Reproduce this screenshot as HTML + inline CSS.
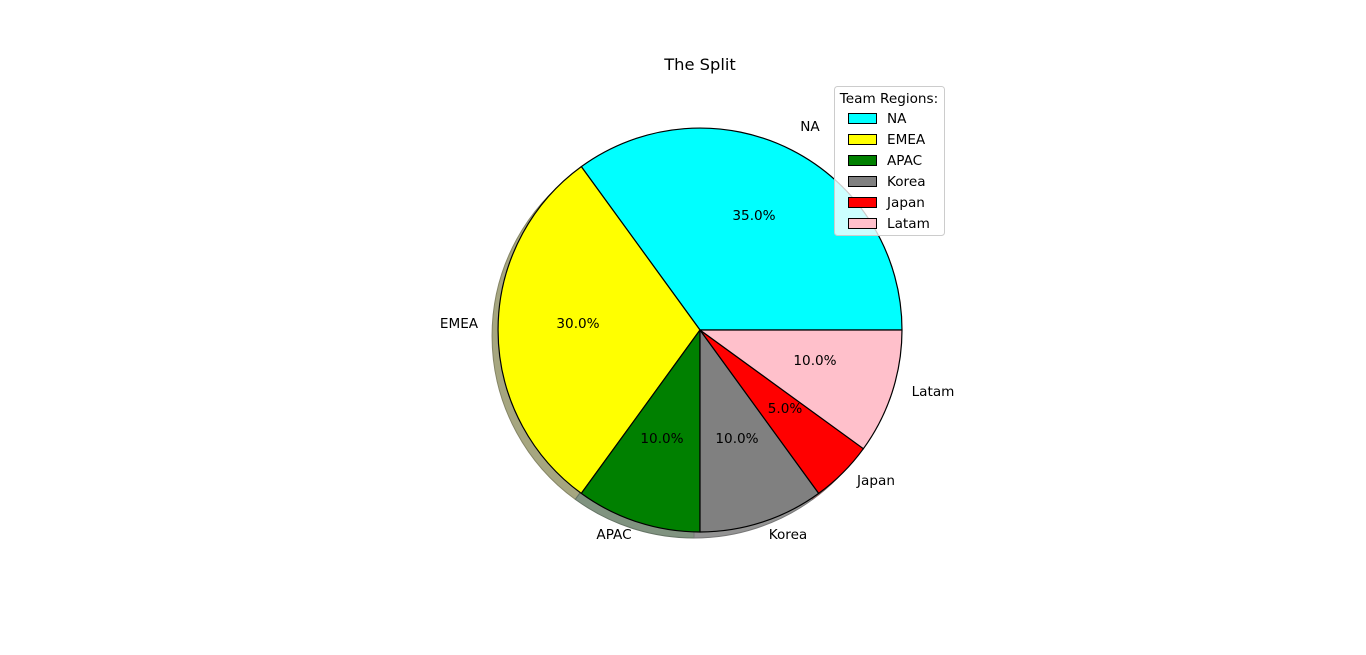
<!DOCTYPE html>
<html><head><meta charset="utf-8"><style>
html,body{margin:0;padding:0;background:#fff;}
svg{display:block;}
text{font-family:"DejaVu Sans","Liberation Sans",sans-serif;font-size:13.6px;fill:#000;}
</style></head><body>
<svg width="1366" height="655" viewBox="0 0 1366 655" xmlns="http://www.w3.org/2000/svg">
<g transform="translate(-6,6)" stroke-width="1" stroke-linejoin="round">
<path d="M700,330 L902,330 A202,202 0 0 0 581.3,166.6 Z" fill="#80a6a6" stroke="#668585"/>
<path d="M700,330 L581.3,166.6 A202,202 0 0 0 581.3,493.4 Z" fill="#a6a680" stroke="#858566"/>
<path d="M700,330 L581.3,493.4 A202,202 0 0 0 700,532 Z" fill="#809380" stroke="#667566"/>
<path d="M700,330 L700,532 A202,202 0 0 0 818.7,493.4 Z" fill="#939393" stroke="#777"/>
<path d="M700,330 L818.7,493.4 A202,202 0 0 0 863.4,448.7 Z" fill="#a68080" stroke="#856666"/>
<path d="M700,330 L863.4,448.7 A202,202 0 0 0 902,330 Z" fill="#a69b9d" stroke="#857c7e"/>
</g>
<g stroke="#000" stroke-width="1.2" stroke-linejoin="round">
<path d="M700,330 L902,330 A202,202 0 0 0 581.3,166.6 Z" fill="#00ffff"/>
<path d="M700,330 L581.3,166.6 A202,202 0 0 0 581.3,493.4 Z" fill="#ffff00"/>
<path d="M700,330 L581.3,493.4 A202,202 0 0 0 700,532 Z" fill="#008000"/>
<path d="M700,330 L700,532 A202,202 0 0 0 818.7,493.4 Z" fill="#808080"/>
<path d="M700,330 L818.7,493.4 A202,202 0 0 0 863.4,448.7 Z" fill="#ff0000"/>
<path d="M700,330 L863.4,448.7 A202,202 0 0 0 902,330 Z" fill="#ffc0cb"/>
</g>
<text x="700" y="70" text-anchor="middle" style="font-size:16.3px">The Split</text>
<g text-anchor="middle" dominant-baseline="central">
<text x="810" y="127">NA</text>
<text x="459" y="324">EMEA</text>
<text x="614" y="535">APAC</text>
<text x="788" y="535">Korea</text>
<text x="876" y="481">Japan</text>
<text x="933" y="392">Latam</text>
<text x="754" y="216">35.0%</text>
<text x="578" y="324">30.0%</text>
<text x="662" y="439">10.0%</text>
<text x="737" y="439">10.0%</text>
<text x="785" y="409">5.0%</text>
<text x="815" y="361">10.0%</text>
</g>
<rect x="834.5" y="86.5" width="110" height="149" rx="3" fill="#fff" fill-opacity="0.8" stroke="#ccc"/>
<text x="889" y="103" text-anchor="middle">Team Regions:</text>
<g stroke="#000" stroke-width="1">
<rect x="848.5" y="113.5" width="28" height="10" fill="#00ffff"/>
<rect x="848.5" y="134.5" width="28" height="10" fill="#ffff00"/>
<rect x="848.5" y="155.5" width="28" height="10" fill="#008000"/>
<rect x="848.5" y="176.5" width="28" height="10" fill="#808080"/>
<rect x="848.5" y="197.5" width="28" height="10" fill="#ff0000"/>
<rect x="848.5" y="218.5" width="28" height="10" fill="#ffc0cb"/>
</g>
<g dominant-baseline="central">
<text x="887" y="119">NA</text>
<text x="887" y="140">EMEA</text>
<text x="887" y="161">APAC</text>
<text x="887" y="182">Korea</text>
<text x="887" y="203">Japan</text>
<text x="887" y="224">Latam</text>
</g>
</svg>
</body></html>
